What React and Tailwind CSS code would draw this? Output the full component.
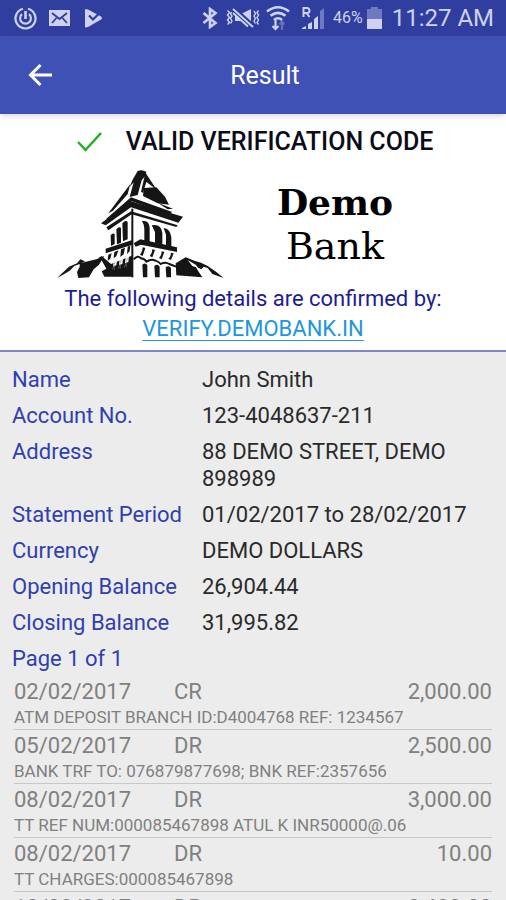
import React from "react";

const details = [
  ["Name", "John Smith"],
  ["Account No.", "123-4048637-211"],
  ["Address", "88 DEMO STREET, DEMO 898989"],
  ["Statement Period", "01/02/2017 to 28/02/2017"],
  ["Currency", "DEMO DOLLARS"],
  ["Opening Balance", "26,904.44"],
  ["Closing Balance", "31,995.82"],
];

const transactions = [
  ["02/02/2017", "CR", "2,000.00", "ATM DEPOSIT BRANCH ID:D4004768 REF: 1234567"],
  ["05/02/2017", "DR", "2,500.00", "BANK TRF TO: 076879877698; BNK REF:2357656"],
  ["08/02/2017", "DR", "3,000.00", "TT REF NUM:000085467898 ATUL K INR50000@.06"],
  ["08/02/2017", "DR", "10.00", "TT CHARGES:000085467898"],
  ["10/02/2017", "DR", "2,400.00", ""],
];

function StatusBar() {
  return (
    <div className="flex h-9 shrink-0 items-center justify-between bg-[#303f9f] pl-3.5 pr-3 text-[#cdd2f0]">
      <div className="flex items-center gap-3">
        <svg width="23" height="23" viewBox="0 0 23 23" fill="none" stroke="currentColor" strokeWidth="2.2">
          <path d="M9 1.800A10 10 0 1 0 14 1.800" />
          <path d="M8 7.200a5.400 5.400 0 1 0 7 0" />
          <path d="M11.5 4v8" strokeWidth="2.6" />
        </svg>
        <svg width="21" height="16" viewBox="0 0 21 16">
          <rect width="21" height="16" fill="currentColor" />
          <path d="M3 3l7.500 6L18 3M3 13l4.500-5M18 13l-4.500-5" fill="none" stroke="#303f9f" strokeWidth="1.8" />
        </svg>
        <svg width="20" height="20" viewBox="0 0 20 20" className="ml-0.5">
          <path d="M1 1l3 .5 13 7q2 1.500 0 3L4 19l-3 .5z" fill="currentColor" />
          <path d="M5 7.500l4 4L17.500 3" fill="none" stroke="#303f9f" strokeWidth="2.2" />
        </svg>
      </div>
      <div className="flex items-center">
        <svg width="16" height="22" viewBox="0 0 16 22" fill="none" stroke="currentColor" strokeWidth="2.6">
          <path d="M1.500 6l12 10L8 20V2l5.500 4-12 10" />
        </svg>
        <svg width="34" height="20" viewBox="0 0 34 20" className="ml-2">
          <path d="M9 6h6l10-5v17l-10-5H9z" fill="currentColor" />
          <path d="M7 1l20 18" stroke="#303f9f" strokeWidth="6" />
          <path d="M7 1l20 18M7 5l15 13.500" stroke="currentColor" strokeWidth="1.8" />
          <path d="M1.500 2.500l2 2-2 2.500 2 2.500-2 2.500 2 2.500-2 2M5.500 4l-1 2 1.500 2-1.500 2.500 1.500 2.500-1.500 2.500M28 3l1.500 2.500L28 8l1.500 2.500L28 13l1.500 2.500M32.500 2.500l-1.500 2 1.500 2.500-1.500 2.500 1.500 2.500-1.500 2.500 1.500 2" fill="none" stroke="currentColor" strokeWidth="1.400" />
        </svg>
        <svg width="24" height="26" viewBox="0 0 24 26" fill="none" stroke="currentColor" strokeWidth="2.6" className="ml-1.5">
          <path d="M1 6.500q11-8.500 22 0M4.500 10.800q7.500-6 15 0M8 15q4-3.500 8 0" />
          <path d="M9.500 15v9M6.500 21l3 3 3-3" strokeWidth="2.200" />
          <path d="M16 25v-8M13.500 19.500l2.500-3 2.500 3" opacity=".35" strokeWidth="2" />
        </svg>
        <svg width="23" height="24" viewBox="0 0 23 24" className="ml-3">
          <path d="M1.500 11V2h3.500a2.200 2.200 0 0 1 0 5H1.500M4.500 7l3 4" fill="none" stroke="currentColor" strokeWidth="2" />
          <path d="M0 23h4v-3l-4 2zM6 23h4v-7l-4 2zM12 23h4V10l-4 3z" fill="currentColor" />
          <path d="M18 23h4V2l-4 3z" fill="currentColor" opacity=".4" />
        </svg>
        <span className="ml-2 text-base leading-5">46%</span>
        <svg width="15" height="22" viewBox="0 0 15 22" className="ml-1">
          <path d="M4 0h7v2h4v10H0V2h4z" fill="currentColor" opacity=".4" />
          <path d="M0 12h15v10H0z" fill="currentColor" />
        </svg>
        <span className="ml-2.5 text-2xl leading-8">11:27 AM</span>
      </div>
    </div>
  );
}

function BankLogo() {
  return (
    <svg width="168" height="112" viewBox="20 140 504 336" fill="#151515" role="img" aria-label="Demo Bank tower">
      {/* spire and roof */}
      <path d="M262 149q12-6 26 2l-4 14-10 12-12 44-24 6 12-44-12 14 8-20z" />
      <path d="M284 152l34 52-30-22-10 32-6-2 10-44z" />
      <path d="M280 200l38-2 26 28 12 24-34-4-44-22z" />
      <path d="M240 188l-8 30-44 50-14 8 36-48z" />
      <path d="M322 244l46 18-16 2z" />
      {/* cornices */}
      <path d="M168 292l74-64 124 44-10 6-112-38-68 58z" />
      <path d="M152 306l90-66 156 46-14 18-142-46-76 54z" />
      <path d="M168 318l74-48 140 42-4 5-134-38-70 48z" />
      <path d="M243 262h6v206h-6z" />
      {/* arched windows */}
      <path d="M181 342q6-8 12-4v30l-11 6zM198 324q8-10 14-4v44l-12 5zM216 306q10-12 16-4v52l-14 6z" />
      <path d="M274 300q22-6 24 20v44l-16-4v-34q0-18-8-26zM304 312q28-6 32 22v36l-22-6V332zM340 320q20 2 23 28v28l-16-4v-32z" />
      <path d="M166 382l80-26v14l-80 26zM250 366l20-12 110 24v14l-108-22-16 6z" />
      {/* corbels */}
      <path d="M174 400l10-4-4 16-8 6zM192 392l12-5-6 18-8 6zM212 384l12-5-4 20-10 8zM232 376l8-4-2 18-8 8z" />
      <path d="M277 378l8 2-8 24-8-4q8-8 8-22zM306 384l8 2-8 22-8-4q8-8 8-20zM334 390l8 2-8 22-8-4q8-8 8-20zM362 394l8 2-8 20-8-4q8-6 8-18z" />
      {/* base */}
      <path d="M154 450l14-8-16-28-8-4 10-6 28 24 66-26v64h-86z" />
      <path d="M190 418q8-8 10 0l-2 14-10 4zM208 412q8-8 10 0l-2 16-10 4zM226 404q8-8 10 0l-2 18-10 4z" fill="#fff" />
      <path d="M194 422l-3 8M213 416l-3 10M231 410l-3 10M186 444q4-10 6-12v14M204 442q4-12 6-14v14M222 438q4-12 6-14v14" stroke="#777" strokeWidth="2" fill="none" />
      <path d="M250 414q12-14 22-3 12 2 16 10 16-10 27-3 12 4 16 10 14-8 26 0 10 4 20 8" fill="none" stroke="#151515" strokeWidth="6" />
      <path d="M276 430q10-8 15 2v36h-13zM312 434q10-8 16 2v32h-14zM346 438q10-8 16 2v28h-14z" />
      {/* mountains */}
      <path d="M20 470l36-34 24-10 10-12 14 6-16 8-16 6-14 14-20 12z" />
      <path d="M88 426l50-12 24-10-16 26-16 14-14 24-32 2-4-18 8-16z" />
      <path d="M376 426l30-18 26 10 20 6 20 10 26 18 22 18-34-12-14-18-12-4-6 8-18-8 8 14 12 18-78-6z" />
      <path d="M412 416l24 14 8 10-18-6zM458 440l14 18 10 8-22-8-12-10z" fill="#fff" />
    </svg>
  );
}

export default function App() {
  return (
    <div className="flex h-screen flex-col overflow-hidden bg-[#ececec] font-['Roboto',sans-serif]">
      <StatusBar />
      <header className="z-10 flex h-[78px] shrink-0 items-center bg-[#3f51b5] px-7 text-white shadow-md">
        <button type="button" aria-label="Back" className="w-6">
          <svg width="24" height="24" viewBox="0 0 24 24" fill="none" stroke="currentColor" strokeWidth="3">
            <path d="M12.500 2L2.500 12l10 10M2 12h22" />
          </svg>
        </button>
        <h1 className="flex-1 pt-0.5 text-center text-[25px] leading-8">Result</h1>
      </header>

      <section className="shrink-0 border-b-2 border-[#7f86c8] bg-white pt-3 pb-1.5 text-center">
        <div className="flex items-center justify-center gap-6 pl-1">
          <svg width="25" height="20" viewBox="0 0 25 20" fill="none" stroke="#1db31d" strokeWidth="2.500">
            <path d="M1 10l7.500 8L24 1" />
          </svg>
          <h2 className="text-[25px] leading-8 font-medium text-[#0c0c18]">VALID VERIFICATION CODE</h2>
        </div>
        <div className="mt-2.5 flex items-center justify-center gap-13 pr-14">
          <BankLogo />
          <div className="font-['DejaVu_Serif',serif] leading-11 text-black">
            <div className="text-4xl leading-11 font-bold">Demo</div>
            <div className="text-[38px] leading-11">Bank</div>
          </div>
        </div>
        <p className="mt-1 text-[22px] leading-[30px] text-[#1c1c96]">The following details are confirmed by:</p>
        <a href="#verify" className="block text-[22px] leading-[30px] text-[#2196dc] underline decoration-1 underline-offset-4">VERIFY.DEMOBANK.IN</a>
      </section>

      <main className="min-h-0 flex-1 overflow-hidden">
        <dl className="grid grid-cols-[190px_1fr] gap-y-[9px] px-3 pt-3.5 text-[22px] leading-[27px]">
          {details.map(([label, value]) => (
            <React.Fragment key={label}>
              <dt className="text-[#303fae]">{label}</dt>
              <dd className="text-[#2a2a2a]">{value}</dd>
            </React.Fragment>
          ))}
        </dl>
        <p className="mt-[9px] mb-1 px-3 text-[22px] leading-[27px] text-[#303fae]">Page 1 of 1</p>
        <ul className="px-3.5 text-[#808080]">
          {transactions.map(([date, kind, amount, note]) => (
            <li key={date + amount} className="border-b border-[#c8c8c8] pt-0.5">
              <div className="flex text-[22px] leading-7">
                <span className="w-40">{date}</span>
                <span className="flex-1">{kind}</span>
                <span>{amount}</span>
              </div>
              <p className="text-[17px] leading-[23px]">{note}</p>
            </li>
          ))}
        </ul>
      </main>
    </div>
  );
}
